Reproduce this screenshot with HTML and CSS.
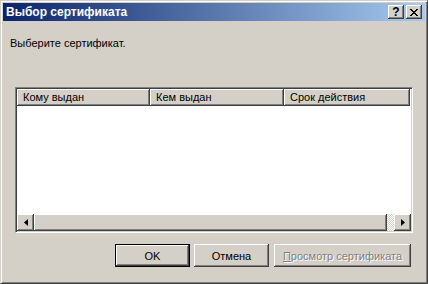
FILE: index.html
```html
<!DOCTYPE html>
<html lang="ru">
<head>
    <meta charset="UTF-8">
    <title>Выбор сертификата</title>
    <link rel="stylesheet" href="styles.css">
</head>
<body>

    <div class="window">
        <div class="title-bar">
            <span class="title-text">Выбор сертификата</span>
            <div class="title-buttons">
                <button class="title-btn help">?</button>
                <button class="title-btn close">
                    <svg width="8" height="7" viewBox="0 0 8 7">
                        <path d="M0 0h2v1h1v1h2v-1h1v-1h2v1h-1v1h-1v1h-1v1h1v1h1v1h1v1h-2v-1h-1v-1h-2v1h-1v1h-2v-1h1v-1h1v-1h1v-1h-1v-1h-1v-1h-1z" fill="#000"/>
                    </svg>
                </button>
            </div>
        </div>

        <div class="content">
            <div class="prompt">Выберите сертификат.</div>

            <div class="list-view">
                <div class="list-header">
                    <div class="col col-to">Кому выдан</div>
                    <div class="col col-by">Кем выдан</div>
                    <div class="col col-date">Срок действия</div>
                </div>
                <div class="list-body"></div>
                <div class="h-scroll">
                    <div class="scroll-btn">
                        <svg width="4" height="7" viewBox="0 0 4 7"><path d="M4 0v7L0 3.5z" fill="#000"/></svg>
                    </div>
                    <div class="scroll-track">
                        <div class="scroll-thumb"></div>
                    </div>
                    <div class="scroll-btn">
                        <svg width="4" height="7" viewBox="0 0 4 7"><path d="M0 0v7l4-3.5z" fill="#000"/></svg>
                    </div>
                </div>
            </div>

            <div class="button-row">
                <button class="btn default">OK</button>
                <button class="btn">Отмена</button>
                <button class="btn wide" disabled><u>П</u>росмотр сертификата</button>
            </div>
        </div>
    </div>

</body>
</html>
```

FILE: styles.css
```css
body {
    margin: 0;
    padding: 0;
    background-color: #d4d0c8;
    font-family: "Liberation Sans", Arial, sans-serif;
    font-size: 11px;
    color: #000;
}

.window {
    width: 428px;
    height: 284px;
    box-sizing: border-box;
    background-color: #d4d0c8;
    border-top: 1px solid #d4d0c8;
    border-left: 1px solid #d4d0c8;
    border-right: 1px solid #404040;
    border-bottom: 1px solid #404040;
    box-shadow: inset 1px 1px #fff, inset -1px -1px #808080;
    padding: 2px;
    display: flex;
    flex-direction: column;
}

.title-bar {
    height: 18px;
    background: linear-gradient(to right, #0a246a, #a6caf0);
    display: flex;
    align-items: center;
    justify-content: space-between;
    padding-left: 3px;
    padding-right: 3px;
}

.title-text {
    color: #fff;
    font-weight: bold;
    font-size: 12px;
}

.title-buttons {
    display: flex;
    gap: 2px;
}

.title-btn {
    width: 16px;
    height: 14px;
    padding: 0;
    margin: 0;
    border: none;
    background-color: #d4d0c8;
    box-shadow: inset -1px -1px #404040, inset 1px 1px #fff, inset -2px -2px #808080;
    display: flex;
    align-items: center;
    justify-content: center;
    font-family: "Liberation Sans", Arial, sans-serif;
    font-weight: bold;
    font-size: 12px;
    line-height: 12px;
    color: #000;
}

.content {
    flex: 1;
    display: flex;
    flex-direction: column;
    padding: 16px 12px 0 12px;
}

.prompt {
    line-height: 13px;
    margin-left: -5px;
}

.list-view {
    margin-top: 37px;
    width: 398px;
    height: 146px;
    box-sizing: border-box;
    border-top: 1px solid #808080;
    border-left: 1px solid #808080;
    border-right: 1px solid #fff;
    border-bottom: 1px solid #fff;
    box-shadow: inset 1px 1px #404040, inset -1px -1px #d4d0c8;
    padding: 1px;
    background-color: #fff;
    display: flex;
    flex-direction: column;
}

.list-header {
    display: flex;
    height: 17px;
}

.col {
    box-sizing: border-box;
    height: 17px;
    line-height: 16px;
    padding-left: 6px;
    background-color: #d4d0c8;
    box-shadow: inset -1px -1px #404040, inset 1px 1px #fff, inset -2px -2px #808080;
    white-space: nowrap;
    overflow: hidden;
}

.col-to {
    width: 133px;
}

.col-by {
    width: 134px;
}

.col-date {
    width: 126px;
}

.list-body {
    flex: 1;
}

.h-scroll {
    display: flex;
    height: 17px;
}

.scroll-btn {
    width: 17px;
    height: 17px;
    box-sizing: border-box;
    background-color: #d4d0c8;
    box-shadow: inset -1px -1px #404040, inset 1px 1px #fff, inset -2px -2px #808080;
    display: flex;
    align-items: center;
    justify-content: center;
}

.scroll-track {
    flex: 1;
    background: repeating-conic-gradient(#d4d0c8 0 25%, #fff 0 50%) 0 0 / 2px 2px;
}

.scroll-thumb {
    width: 353px;
    height: 17px;
    background-color: #d4d0c8;
    box-shadow: inset -1px -1px #404040, inset 1px 1px #fff, inset -2px -2px #808080;
}

.button-row {
    margin-top: 11px;
    margin-right: 2px;
    display: flex;
    justify-content: flex-end;
    gap: 4px;
}

.btn {
    width: 75px;
    height: 23px;
    padding: 0;
    margin: 0;
    border: none;
    background-color: #d4d0c8;
    box-shadow: inset -1px -1px #404040, inset 1px 1px #fff, inset -2px -2px #808080;
    font-family: "Liberation Sans", Arial, sans-serif;
    font-size: 11px;
    color: #000;
}

.btn.default {
    box-shadow: inset 0 0 0 1px #000, inset -2px -2px #404040, inset 2px 2px #fff, inset -3px -3px #808080;
}

.btn.wide {
    width: 137px;
    margin-left: 1px;
}

.btn:disabled {
    color: #808080;
    text-shadow: 1px 1px #fff;
}
```
